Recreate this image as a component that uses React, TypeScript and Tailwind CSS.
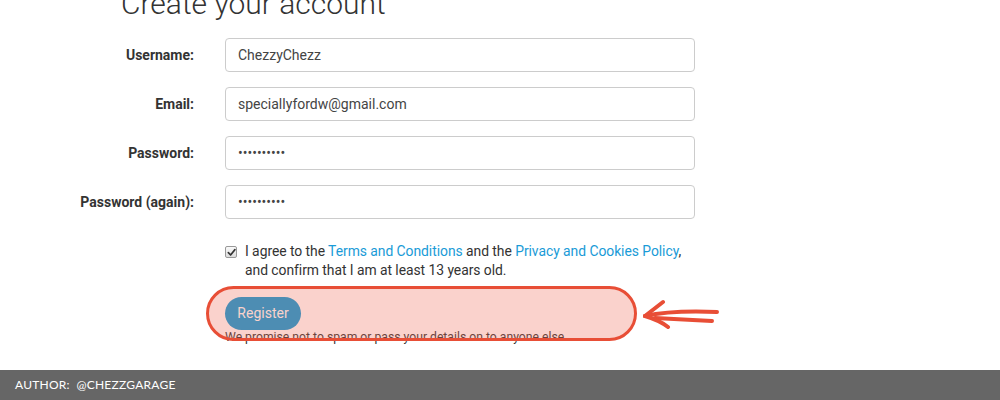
import { useState } from 'react';

const fields = [
  { label: 'Username:', value: 'ChezzyChezz', type: 'text' },
  { label: 'Email:', value: 'speciallyfordw@gmail.com', type: 'text' },
  { label: 'Password:', value: 'abcdefghij', type: 'password' },
  { label: 'Password (again):', value: 'abcdefghij', type: 'password' },
];

export default function App() {
  const [agreed, setAgreed] = useState(true);

  return (
    <div className="h-screen flex flex-col bg-white text-[#333] font-['Roboto',sans-serif]">
      <main className="flex-1 overflow-hidden">
        <h1 className="ml-[121px] mt-[-13px] text-[30px] leading-[33px] font-light text-[#333]">
          Create your account
        </h1>

        <div className="mt-[18px] flex flex-col gap-[15px]">
          {fields.map((f) => (
            <div key={f.label} className="flex items-center gap-[31px]">
              <label className="w-[194px] text-right text-[14px] font-bold text-[#333]">{f.label}</label>
              <input
                type={f.type}
                defaultValue={f.value}
                readOnly
                className="w-[470px] h-[34px] px-[12px] rounded-[4px] border border-[#ccc] text-[14px] text-[#444] outline-none"
              />
            </div>
          ))}
        </div>

        <div className="ml-[225px] mt-[23px] flex gap-[8px] w-[470px]">
          <button
            onClick={() => setAgreed(!agreed)}
            className="mt-[4px] w-[12px] h-[12px] shrink-0 rounded-[2px] border border-[#999] bg-[linear-gradient(#fafafa,#dcdcdc)] flex items-center justify-center"
          >
            {agreed && (
              <svg width="9" height="9" viewBox="0 0 10 10">
                <path d="M1.5 5.2 L4 7.8 L8.8 1.8" fill="none" stroke="#333" strokeWidth="1.8" strokeLinecap="round" strokeLinejoin="round" />
              </svg>
            )}
          </button>
          <p className="text-[13.9px] leading-[19px] tracking-[-0.05px] text-[#333]">
            I agree to the <a className="text-[#1a9bd7]">Terms and Conditions</a> and the{' '}
            <a className="text-[#1a9bd7]">Privacy and Cookies Policy</a>, and confirm that I am at least 13 years old.
          </p>
        </div>

        <div className="relative ml-[225px] mt-[17px] w-[420px]">
          <button className="h-[33px] w-[76px] rounded-full bg-[#089cdb] text-white text-[14px]">Register</button>
          <p className="text-[12.2px] leading-[14px] text-[#333]">
            We promise not to spam or pass your details on to anyone else.
          </p>

          {/* highlight annotation */}
          <div className="absolute left-[-19px] top-[-11px] w-[431px] h-[55px] rounded-full border-[3px] border-[#e84e36] bg-[#ee6a55]/30" />
          <svg className="absolute left-[418px] top-[1px]" width="80" height="40" viewBox="0 0 80 40">
            <g fill="none" stroke="#e84e36" strokeWidth="4" strokeLinecap="round" strokeLinejoin="round">
              <path d="M2 18 C 20 14, 50 13, 74 14" />
              <path d="M12 20 C 30 21, 50 22, 69 23" />
              <path d="M2 18 L 20 4" />
              <path d="M2 18 C 12 21, 20 25, 25 29" />
            </g>
          </svg>
        </div>
      </main>

      <footer className="h-[30px] bg-[#666] flex items-center px-[15px]">
        <span className="text-white text-[12px] tracking-[0.02em] uppercase font-['Lato',sans-serif]">
          Author:&nbsp; @chezzgarage
        </span>
      </footer>
    </div>
  );
}
